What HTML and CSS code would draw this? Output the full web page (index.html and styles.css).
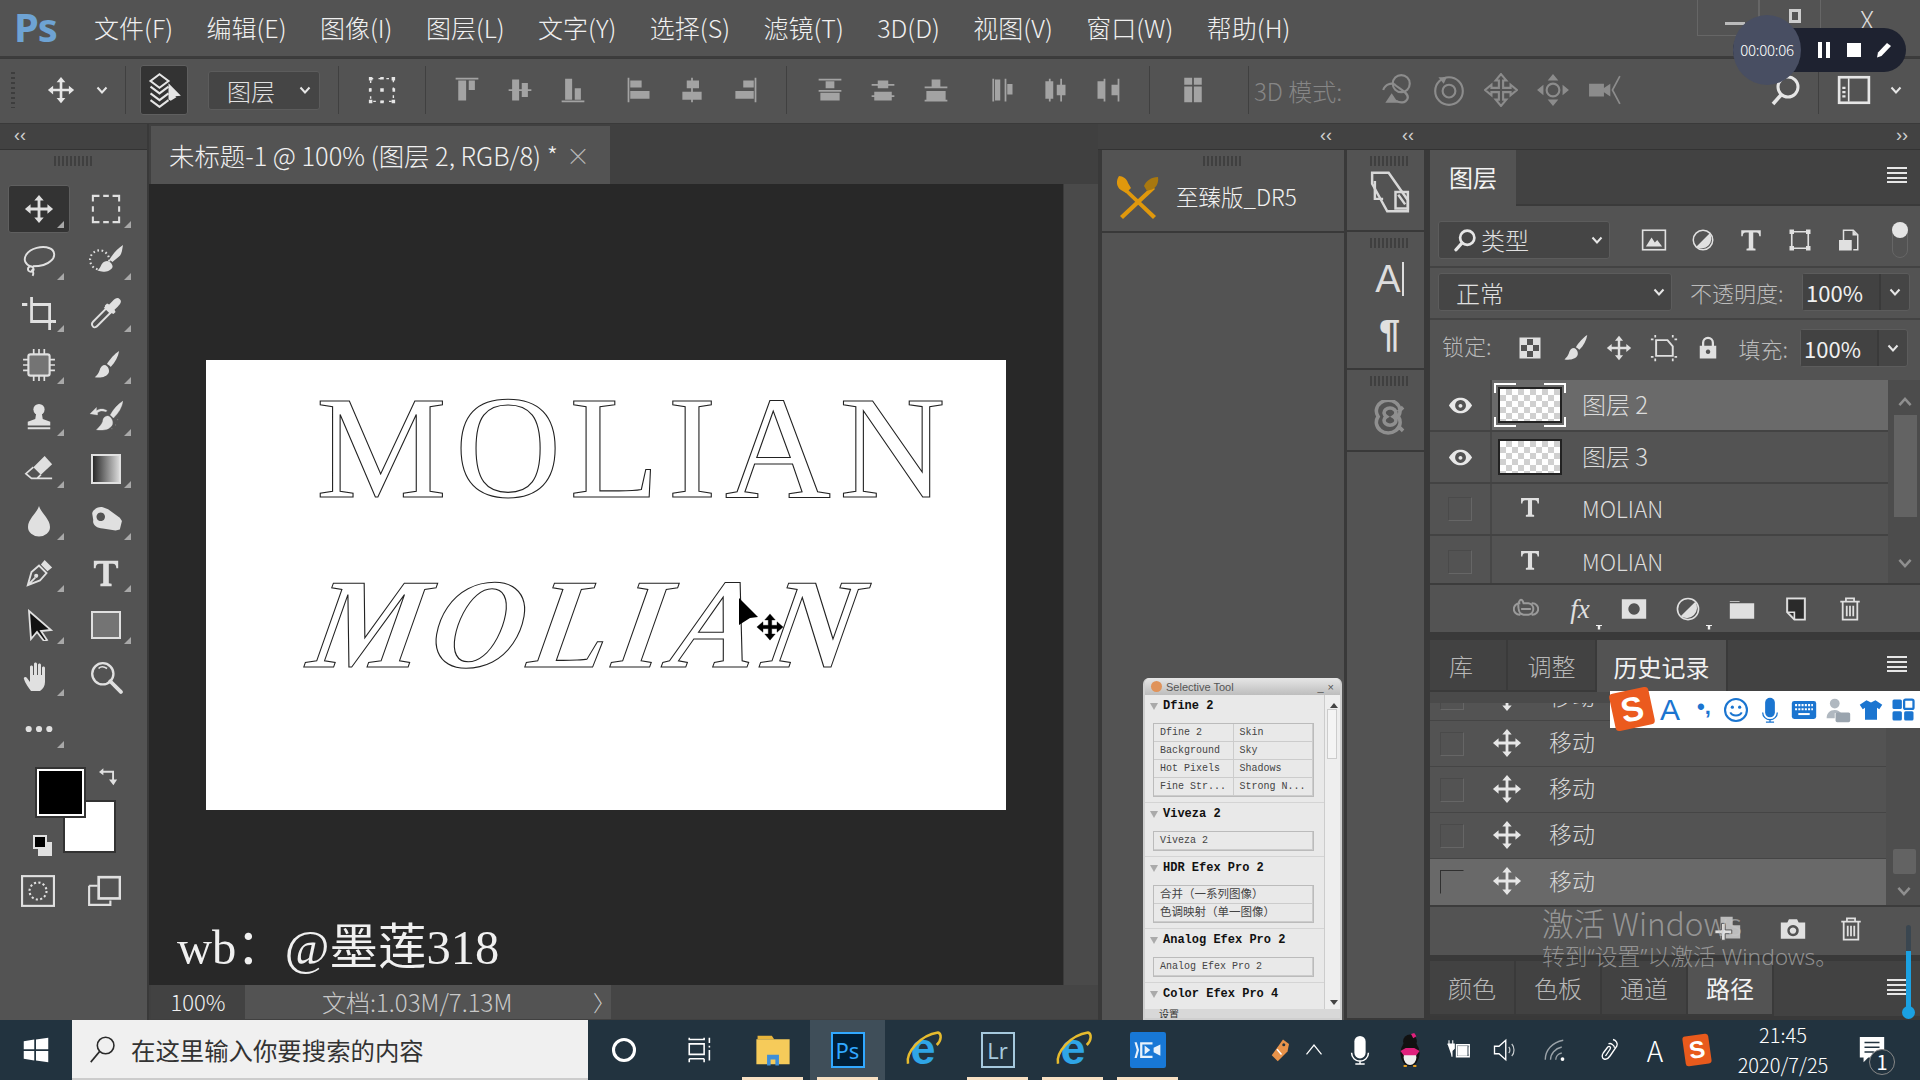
FILE: index.html
```html
<!DOCTYPE html>
<html lang="zh-CN">
<head>
<meta charset="utf-8">
<title>Photoshop</title>
<link rel="stylesheet" href="styles.css">
</head>
<body>
<svg class="sprite" xmlns="http://www.w3.org/2000/svg">
<defs>
<linearGradient id="grad"><stop offset="0" stop-color="#222"/><stop offset="1" stop-color="#ddd"/></linearGradient>
<symbol id="move" viewBox="0 0 32 32"><path d="M16 1l5 6h-3.500v7.500H25V11l6 5-6 5v-3.500h-7.500V25H21l-5 6-5-6h3.500v-7.500H7V21l-6-5 6-5v3.500h7.500V7H11z"/></symbol>
<symbol id="marquee" viewBox="0 0 32 32"><path d="M2 8V2h7M13 2h6M23 2h7v6M30 13v6M30 24v6h-7M19 30h-6M9 30H2v-6M2 19v-6" fill="none" stroke="currentColor" stroke-width="2.200"/></symbol>
<symbol id="lasso" viewBox="0 0 32 32"><path d="M8 21C3 19 1 15 4 10 8 4 19 1 26 4c5 2 6 8 1 12-4 4-11 5-17 5M9 21c-3 0-4 2-3 4 2 2 5 1 5-1s-3-4-5-3M9 24c2 2 2 4 1 6" fill="none" stroke="currentColor" stroke-width="1.800"/></symbol>
<symbol id="quick" viewBox="0 0 32 32"><circle cx="10" cy="15" r="9" fill="none" stroke="currentColor" stroke-width="2" stroke-dasharray="1.500 2.500"/><path d="M32 1c-1 5-1 9-4 11l-6 5c-1-1-2-2-3-2 3-5 8-11 13-14zM17 16c-3 0-5 2-6 5-1 2-2 3-3 4 5 2 12 1 14-3 1-2-2-6-5-6z"/></symbol>
<symbol id="crop" viewBox="0 0 32 32"><path d="M9 1v23h20M9 8h17v24M0 8h5M29 24h4" fill="none" stroke="currentColor" stroke-width="2.600"/></symbol>
<symbol id="dropper" viewBox="0 0 32 32"><path d="M4 29c-2-2-1-4 0-5l13-13 4 4L8 28c-1 1-3 2-4 1z" fill="none" stroke="currentColor" stroke-width="1.800"/><path d="M15 9l2-2 2 1 3-3c3-3 5-4 7-2s1 4-2 7l-3 3 1 2-2 2-2-1-1 1-6-6 1-1z"/></symbol>
<symbol id="patch" viewBox="0 0 32 32"><rect x="6" y="6" width="20" height="20" rx="2" fill="#747474" stroke="currentColor" stroke-width="2"/><path d="M11 1v30M16 1v30M21 1v30M1 11h30M1 16h30M1 21h30" stroke="currentColor" stroke-width="1.600" stroke-dasharray="5 20 7"/></symbol>
<symbol id="brush" viewBox="0 0 32 32"><path d="M30 1c-1 6-4 12-9 17-1-1-2-2-4-3 3-5 8-11 13-14zM15 16c-3 0-5 2-6 6-1 3-3 5-5 7 6 1 13 0 15-5 1-3-1-7-4-8z"/></symbol>
<symbol id="stamp" viewBox="0 0 32 32"><circle cx="16" cy="8" r="6"/><path d="M13 12h6l1 6 8 3v4H4v-4l8-3zM4 27h24v2H4z"/></symbol>
<symbol id="hist" viewBox="0 0 32 32"><path d="M32 1c-1 6-4 11-9 16-1-1-2-2-3-3 3-5 7-10 12-13zM18 15c-3 0-5 2-5 5-1 3-3 5-6 8 6 1 13 0 15-5 1-3-1-7-4-8zM1 13l6-6v3c3-2 7-2 10 0l-1 1c-3-1-6-1-8 1v2zM27 18v1M25 23v1M21 27h1" stroke="currentColor" stroke-width=".3"/></symbol>
<symbol id="eraser" viewBox="0 0 32 32"><path d="M22 2l8 9-12 11-8-8z"/><path d="M10 14l-8 7 6 5h22M18 22l-4 4" fill="none" stroke="currentColor" stroke-width="1.800"/></symbol>
<symbol id="gradient" viewBox="0 0 32 32"><rect x="2" y="2" width="28" height="28" fill="url(#grad)" stroke="currentColor" stroke-width="2"/></symbol>
<symbol id="drop" viewBox="0 0 32 32"><path d="M16 1c2 7 11 13 11 21a11 9.500 0 0 1-22 0C5 14 14 8 16 1z"/></symbol>
<symbol id="smudge" viewBox="0 0 32 32"><path fill-rule="evenodd" d="M3 9c0-3 5-7 10-6l5 2 11 8 2 3-2 8-4 1-12-2c-6 0-10-4-9-8l-1-6zm8-1a4 4 0 1 0 .1 0z"/></symbol>
<symbol id="pen" viewBox="0 0 32 32"><path d="M4 29l4-14 8-7 8 8-7 8zM4 29l8-8" fill="none" stroke="currentColor" stroke-width="2"/><path d="M18 7l4-5 8 8-5 4z"/><circle cx="13" cy="19" r="2.200"/></symbol>
<symbol id="textt" viewBox="0 0 32 32"><path d="M3 3h26v8h-2c0-3-1-5-4-5h-4v21l3 .5V30H10v-2.500l3-.5V6H9c-3 0-4 2-4 5H3z"/></symbol>
<symbol id="arrow" viewBox="0 0 32 32"><path d="M6 2l22 19-10 1 6 9-3 1-7-9-6 7z" fill="#111" stroke="#e0e0e0" stroke-width="1.800"/></symbol>
<symbol id="arrowblack" viewBox="0 0 20 27"><path d="M0 0L19 19 11 20 0 27z" fill="#000"/></symbol>
<symbol id="rect" viewBox="0 0 32 32"><rect x="2" y="3" width="28" height="26" fill="#747474" stroke="currentColor" stroke-width="2"/></symbol>
<symbol id="hand" viewBox="0 0 32 32"><path d="M8 30c-2-3-6-8-7-12-1-2 2-3 3-1l3 4V6c0-2 3-2 3 0v8h1V3c0-2 3-2 3 0v11h1V4c0-2 3-2 3 0v10h1V7c0-2 3-2 3 0v14c0 4-2 7-5 9z"/></symbol>
<symbol id="zoom" viewBox="0 0 32 32"><circle cx="13" cy="13" r="10" fill="none" stroke="currentColor" stroke-width="2.200"/><path d="M9 8c2-2 5-2 8 0" fill="none" stroke="currentColor" stroke-width="1.500"/><path d="M20 20l10 10" stroke="currentColor" stroke-width="3.600" stroke-linecap="round"/></symbol>
<symbol id="dots" viewBox="0 0 32 32"><circle cx="5" cy="16" r="3.300"/><circle cx="16" cy="16" r="3.300"/><circle cx="27" cy="16" r="3.300"/></symbol>
<symbol id="swap" viewBox="0 0 32 32"><path d="M0 8l7-6v4h17v14h5l-6 9-7-9h5V9H7v4z"/></symbol>
<symbol id="qmask" viewBox="0 0 32 32"><rect x="1" y="2" width="30" height="28" fill="none" stroke="currentColor" stroke-width="2"/><circle cx="16" cy="16" r="8" fill="none" stroke="currentColor" stroke-width="2" stroke-dasharray="2 2.200"/></symbol>
<symbol id="screen" viewBox="0 0 32 32"><path d="M2 11h8M2 11v18h20v-4M2 29" fill="none" stroke="currentColor" stroke-width="2"/><rect x="11" y="3" width="20" height="20" fill="none" stroke="currentColor" stroke-width="2.500"/></symbol>
<symbol id="chev" viewBox="0 0 32 32"><path d="M7 11l9 10 9-10" fill="none" stroke="currentColor" stroke-width="4"/></symbol>
<symbol id="chevup" viewBox="0 0 32 32"><path d="M7 21l9-10 9 10" fill="none" stroke="currentColor" stroke-width="4"/></symbol>
<symbol id="hamb" viewBox="0 0 20 16"><path d="M0 0h20v2H0zM0 5h20v2H0zM0 10h20v2H0zM0 14h20v2H0z"/></symbol>
<symbol id="lens" viewBox="0 0 32 32"><circle cx="19" cy="13" r="9.500" fill="none" stroke="currentColor" stroke-width="3.600"/><path d="M12 20l-8 9" stroke="currentColor" stroke-width="4.500" stroke-linecap="round"/></symbol>
<symbol id="autosel" viewBox="0 0 32 32"><path d="M12 2l8 6-8 6-8-6zM4 13l8 6 8-6M4 19l8 6 8-6M4 25l8 6 8-6" fill="none" stroke="currentColor" stroke-width="1.800"/><path d="M20 10l11 11-5 .5 1 1-5 3-2-1z"/></symbol>
<symbol id="xform" viewBox="0 0 32 32"><path d="M3 3h26v26H3z" fill="none" stroke="currentColor" stroke-width="1.600" stroke-dasharray="3 6"/><path d="M1 1h4v4H1zM27 1h4v4h-4zM1 27h4v4H1zM27 27h4v4h-4zM14 14h4v4h-4zM14 1h4v3h-4zM14 28h4v3h-4zM1 14h3v4H1zM28 14h3v4h-3z"/></symbol>
<symbol id="a1" viewBox="0 0 32 32"><path d="M3 2h26v2H3zM6 5h9v23H6zM18 5h7v11h-7z"/></symbol>
<symbol id="a2" viewBox="0 0 32 32"><path d="M3 15h26v2H3zM7 4h8v24H7zM18 8h7v16h-7z"/></symbol>
<symbol id="a3" viewBox="0 0 32 32"><path d="M3 28h26v2H3zM7 3h8v24H7zM18 14h7v13h-7z"/></symbol>
<symbol id="a4" viewBox="0 0 32 32"><path d="M3 2h2v28H3zM6 5h13v8H6zM6 17h22v9H6z"/></symbol>
<symbol id="a5" viewBox="0 0 32 32"><path d="M15 2h2v28h-2zM10 5h14v9H10zM5 18h22v9H5z"/></symbol>
<symbol id="a6" viewBox="0 0 32 32"><path d="M27 2h2v28h-2zM14 5h12v8H14zM5 17h21v9H5z"/></symbol>
<symbol id="d1" viewBox="0 0 32 32"><path d="M3 3h26v2H3zM11 6h10v8H11zM3 16h26v2H3zM5 19h22v9H5z"/></symbol>
<symbol id="d2" viewBox="0 0 32 32"><path d="M3 9h26v2H3zM10 5h12v4H10zM10 11h12v3H10zM3 22h26v2H3zM6 18h20v4H6zM6 24h20v4H6z"/></symbol>
<symbol id="d3" viewBox="0 0 32 32"><path d="M3 27h26v2H3zM11 4h10v8H11zM3 12h26v2H3zM5 17h22v10H5z"/></symbol>
<symbol id="d4" viewBox="0 0 32 32"><path d="M5 3h2v26H5zM8 4h6v24H8zM19 3h2v26h-2zM22 9h6v12h-6z"/></symbol>
<symbol id="d5" viewBox="0 0 32 32"><path d="M9 3h2v26H9zM5 6h4v20H5zM11 6h3v20h-3zM22 3h2v26h-2zM18 10h4v12h-4zM24 10h4v12h-4z"/></symbol>
<symbol id="d6" viewBox="0 0 32 32"><path d="M11 3h2v26h-2zM4 6h7v20H4zM27 3h2v26h-2zM20 10h7v12h-7z"/></symbol>
<symbol id="d7" viewBox="0 0 32 32"><path d="M6 2h9v8H6zM17 2h9v8h-9zM6 12h9v18H6zM17 12h9v18h-9z"/></symbol>
<symbol id="t1" viewBox="0 0 32 32"><g fill="none" stroke="currentColor" stroke-width="2"><circle cx="20" cy="10" r="8"/><path d="M3 16c2-6 8-7 11-5 3 3 14 8 12 13s-8 4-11 2"/></g><path d="M5 28l6-9 6 9z"/></symbol>
<symbol id="t2" viewBox="0 0 32 32"><g fill="none" stroke="currentColor" stroke-width="2"><circle cx="16" cy="17" r="13"/><circle cx="16" cy="17" r="6"/></g><path d="M6 4h8l-3 6z"/></symbol>
<symbol id="t3" viewBox="0 0 32 32"><path fill="none" stroke="currentColor" stroke-width="2" d="M16 1l5 6h-3v7h7v-3l6 5-6 5v-3h-7v7h3l-5 6-5-6h3v-7H7v3l-6-5 6-5v3h7V7h-3z"/></symbol>
<symbol id="t4" viewBox="0 0 32 32"><path d="M16 1l5 6h-10zM16 31l5-6h-10zM1 16l6-5v10zM31 16l-6-5v10z"/><rect x="10" y="10" width="12" height="12" rx="6" fill="none" stroke="currentColor" stroke-width="2"/></symbol>
<symbol id="t5" viewBox="0 0 32 32"><path d="M1 10h14v12H1zM15 14l6-4v12l-6-4z"/><path d="M30 3l-7 13 7 13" fill="none" stroke="currentColor" stroke-width="1.600"/></symbol>
<symbol id="search" viewBox="0 0 32 32"><circle cx="18" cy="13" r="10" fill="none" stroke="currentColor" stroke-width="3"/><path d="M11 21L3 30" stroke="currentColor" stroke-width="3.600"/></symbol>
<symbol id="search2" viewBox="0 0 32 32"><circle cx="19" cy="12" r="9.500" fill="none" stroke="currentColor" stroke-width="1.800"/><path d="M12 19L2 31" stroke="currentColor" stroke-width="1.800"/></symbol>
<symbol id="wspace" viewBox="0 0 32 32"><rect x="2" y="4" width="28" height="24" fill="none" stroke="currentColor" stroke-width="2.500"/><path d="M11 5v22" stroke="currentColor" stroke-width="1.500"/><path d="M5 13h3v2H5zM5 17h3v2H5zM5 21h3v2H5z"/></symbol>
<symbol id="dr5" viewBox="0 0 48 48"><path d="M6 44L38 14l3 3L9 47z" fill="#e0980c"/><path d="M5 4c4 0 8 3 9 7l3 5-5 5-5-3C2 15 2 8 5 4z" fill="#e0980c"/><path d="M42 44L12 16l-2 3 29 28z" fill="#e0980c"/><path d="M30 14c2-5 7-9 14-9 1 6-2 12-8 13l-3 1z" fill="#a8780f"/></symbol>
<symbol id="libs" viewBox="0 0 32 32"><g fill="none" stroke="currentColor" stroke-width="1.800"><path d="M3 2h12l14 20v8H14L3 10z"/><path d="M5 8v13h6M20 16h9v12H20zM22 18l5 7"/></g></symbol>
<symbol id="glyph" viewBox="0 0 32 32"><path fill="none" stroke="currentColor" stroke-width="3" d="M6 14a10 9 0 1 0 17 0 10 9 0 1 0-17 0zM13 14a5 4 0 1 0 6 0 5 4 0 1 0-6 0zM23 10l4-4M23 22l4 4"/></symbol>
<symbol id="img" viewBox="0 0 32 28"><rect x="2" y="2" width="28" height="24" fill="none" stroke="currentColor" stroke-width="2"/><path d="M6 22l7-11 4 6 3-3 6 8z"/></symbol>
<symbol id="half" viewBox="0 0 32 32"><circle cx="16" cy="16" r="13" fill="none" stroke="currentColor" stroke-width="2"/><path d="M25 7A13 13 0 0 1 7 25z"/></symbol>
<symbol id="shape" viewBox="0 0 32 32"><path d="M5 5h22v22H5z" fill="none" stroke="currentColor" stroke-width="2.200"/><path d="M2 2h6v6H2zM24 2h6v6h-6zM2 24h6v6H2zM24 24h6v6h-6z"/></symbol>
<symbol id="smart" viewBox="0 0 32 32"><path d="M10 16V3h13l6 6v20h-6" fill="none" stroke="currentColor" stroke-width="2"/><path d="M4 16h17v14H4zM22 3v7h7z"/></symbol>
<symbol id="check" viewBox="0 0 32 32"><path d="M3 3h26v26H3z" fill="none" stroke="currentColor" stroke-width="2"/><path d="M3 3h9v9H3zM20 3h9v9h-9zM12 12h8v8h-8zM3 20h9v9H3zM20 20h9v9h-9z"/></symbol>
<symbol id="artb" viewBox="0 0 32 32"><path d="M7 7h13l6 7v11H7z" fill="none" stroke="currentColor" stroke-width="2.200"/><path d="M1 5h3v2H1zM28 5h3v2h-3zM1 25h3v2H1zM28 25h3v2h-3zM5 1h2v3H5zM25 1h2v3h-2zM5 28h2v3H5zM25 28h2v3h-2z"/></symbol>
<symbol id="lock" viewBox="0 0 32 32"><path fill-rule="evenodd" d="M5 13h3V9a8 8 0 0 1 16 0v4h3v17H5zm6 0h10V9a5 5 0 0 0-10 0zm5 5a3 3 0 1 0 .1 0z"/></symbol>
<symbol id="eye" viewBox="0 0 32 22"><path fill-rule="evenodd" d="M1 11C6 3 11 1 16 1s10 2 15 10c-5 8-10 10-15 10S6 19 1 11zm15-7a7 7 0 1 0 .1 0zm0 5a2.500 2.500 0 1 1-.1 0z"/></symbol>
<symbol id="link" viewBox="0 0 32 20"><path d="M10 10h12M9 3H8a7 7 0 0 0 0 14h1M23 3h1a7 7 0 0 1 0 14h-1M7 10a3 7 0 0 1 6-7h6a7 7 0 0 1 6 7 7 7 0 0 1-6 7h-6a7 7 0 0 1-6-7" fill="none" stroke="currentColor" stroke-width="2.400"/></symbol>
<symbol id="mask" viewBox="0 0 32 26"><path fill-rule="evenodd" d="M1 1h30v24H1zM16 6a7 7 0 1 0 .1 0z"/></symbol>
<symbol id="folder" viewBox="0 0 32 26"><path d="M1 3h12v1H1zM1 6h30v19H1z"/></symbol>
<symbol id="newlayer" viewBox="0 0 32 32"><path d="M7 5h18v23H16l-9-9z" fill="#2a2a2a"/><path d="M5 3h22v26H14l-9-9z" fill="none" stroke="currentColor" stroke-width="2.200"/><path d="M5 20h9v9" fill="none" stroke="currentColor" stroke-width="2"/></symbol>
<symbol id="trash" viewBox="0 0 32 32"><path d="M4 7h24M11 6V3h10v3M7 8v21h18V8M12 12v13M16 12v13M20 12v13" fill="none" stroke="currentColor" stroke-width="2.200"/></symbol>
<symbol id="camera" viewBox="0 0 32 26"><path fill-rule="evenodd" d="M1 5h8l2-4h10l2 4h8v20H1zM16 8a7 7 0 1 0 .1 0zm0 3a4 4 0 1 1-.1 0z"/></symbol>
<symbol id="snap" viewBox="0 0 32 32"><path d="M8 3h13v9h8v14H8z" opacity=".75"/><path d="M9 10h4v7h7v4h-7v7H9v-7H2v-4h7z" stroke="#535353" stroke-width="1"/></symbol>
<symbol id="pause" viewBox="0 0 32 32"><path d="M4 0h8v32H4zM20 0h8v32h-8z"/></symbol>
<symbol id="stop" viewBox="0 0 32 32"><path d="M2 2h28v28H2z"/></symbol>
<symbol id="pencil" viewBox="0 0 32 32"><path d="M22 2l8 6L11 28l-9 3 2-10z"/></symbol>
<symbol id="win" viewBox="0 0 32 32"><path d="M2 6l12-2v11H2zM16 4l14-2v13H16zM2 17h12v11L2 26zM16 17h14v13l-14-2z"/></symbol>
<symbol id="circ" viewBox="0 0 32 32"><circle cx="16" cy="16" r="12" fill="none" stroke="currentColor" stroke-width="3.500"/></symbol>
<symbol id="tview" viewBox="0 0 32 32"><path d="M6 2v2h17V2M6 9h17v12H6zM6 26v4M23 26v4M6 26h17M29 2v6M29 11v2M29 16v12" fill="none" stroke="currentColor" stroke-width="1.800"/></symbol>
<symbol id="explorer" viewBox="0 0 32 32"><path d="M3 4h12l2 3H3z" fill="#e8b53c"/><path d="M2 7h28v21H2z" fill="#f6cb5a"/><path d="M11 29v-9h10v9h-3v-5h-4v5z" fill="#3f8fd8"/></symbol>
<symbol id="ie" viewBox="0 0 32 32"><text x="16" y="27" text-anchor="middle" class="ie-e">e</text><path d="M4 27C2 18 14 4 28 2c3 1 3 6-1 10" fill="none" stroke="#e6bb2e" stroke-width="2"/></symbol>
<symbol id="video" viewBox="0 0 32 32"><rect width="32" height="32" rx="2" fill="#1878d6"/><path d="M4 9h2l2 7-2 7H4l2-7zM9 9h11v2h-9v10h9v2H9zM13 12l5 4-5 4zM21 14l6-3v10l-6-3z" fill="#e8f2fb"/></symbol>
<symbol id="tag" viewBox="0 0 32 32"><path d="M20 2l8 6-2 10-13 13-8-8z" fill="#e8934a"/><circle cx="21" cy="9" r="2" fill="#22333f"/><path d="M12 15l6 7" stroke="#fff" stroke-width="2"/></symbol>
<symbol id="caret" viewBox="0 0 32 32"><path d="M4 23L16 8l12 15" fill="none" stroke="currentColor" stroke-width="2"/></symbol>
<symbol id="mic" viewBox="0 0 32 32"><rect x="10" y="1" width="12" height="24" rx="6"/><path d="M7 19a9 9 0 0 0 18 0M16 27v4M11 31h10" fill="none" stroke="currentColor" stroke-width="1.600"/></symbol>
<symbol id="qq" viewBox="0 0 32 32"><ellipse cx="16" cy="19" rx="9" ry="12" fill="#111"/><ellipse cx="16" cy="23" rx="6" ry="7" fill="#eee"/><circle cx="16" cy="8" r="6.500" fill="#111"/><path d="M12 14h8l5 3-3 4H10l-3-4z" fill="#e0207c"/><path d="M17 1l3-1 2 3-3 2z" fill="#e0207c"/><path d="M13 30h-3v2h3zM22 30h-3v2h3z" fill="#e8a020"/></symbol>
<symbol id="plug" viewBox="0 0 32 32"><path d="M14 9h17v16H14z" fill="none" stroke="currentColor" stroke-width="1.800"/><path d="M16 11h12v12H16zM31 13h1v8h-1zM4 3v5M9 3v5M2 8h9v6l-3 3v8" fill="currentColor" stroke="currentColor" stroke-width="1.400"/></symbol>
<symbol id="speaker" viewBox="0 0 32 32"><path d="M2 11h6l9-8v26l-9-8H2z" fill="none" stroke="currentColor" stroke-width="1.800"/><path d="M21 12c2 2 2 6 0 8M25 8c4 4 4 12 0 16" fill="none" stroke="currentColor" stroke-width="1.600" opacity=".75"/></symbol>
<symbol id="wifi" viewBox="0 0 32 32"><path d="M3 29C3 16 12 6 27 3M10 29c0-8 6-15 15-17M17 29c0-4 3-8 8-9" fill="none" stroke="currentColor" stroke-width="1.800" opacity=".55"/><circle cx="26" cy="28" r="2.500"/></symbol>
<symbol id="pentray" viewBox="0 0 32 32"><path d="M20 2c4 1 7 5 5 9l-9 13c-2 3-5 5-8 4s-3-5-1-8l6-8c2-2 5 0 3 3l-6 9M14 8c3-2 8 2 8 5" fill="none" stroke="currentColor" stroke-width="1.800"/></symbol>
<symbol id="notif" viewBox="0 0 32 32"><path d="M3 2h26v22H12l-5 5v-5H3z"/><path d="M8 8h16M8 13h16M8 18h10" stroke="#22333f" stroke-width="1.600"/></symbol>
<symbol id="smiley" viewBox="0 0 32 32"><circle cx="16" cy="16" r="13.500" fill="none" stroke="currentColor" stroke-width="2.600"/><circle cx="11.500" cy="12.500" r="2"/><circle cx="20.500" cy="12.500" r="2"/><path d="M9 19c2 5 12 5 14 0" fill="none" stroke="currentColor" stroke-width="2.400"/></symbol>
<symbol id="kbd" viewBox="0 0 32 24"><rect x="1" y="1" width="30" height="22" rx="3"/><path d="M5 6h22M5 11h22" stroke="#fff" stroke-width="2.500" stroke-dasharray="2.500 1.500"/><path d="M9 17h14" stroke="#fff" stroke-width="2.500"/></symbol>
<symbol id="user" viewBox="0 0 32 32"><circle cx="12" cy="8" r="6" fill="#b0b8c0"/><path d="M2 26c0-6 4-10 10-10 4 0 6 2 8 4H12v6z" fill="#b0b8c0"/><rect x="13" y="19" width="18" height="12" rx="2" fill="#9aa4ae"/></symbol>
<symbol id="shirt" viewBox="0 0 32 32"><path d="M10 3l6 3 6-3 9 6-4 6-3-2v16H8V13l-3 2-4-6z"/></symbol>
<symbol id="grid4" viewBox="0 0 32 32"><rect x="2" y="2" width="12.500" height="12.500" rx="2"/><rect x="17.500" y="2" width="12.500" height="12.500" rx="2" fill="none" stroke="currentColor" stroke-width="3"/><rect x="2" y="17.500" width="12.500" height="12.500" rx="2"/><rect x="17.500" y="17.500" width="12.500" height="12.500" rx="2"/></symbol>
<symbol id="cursormove" viewBox="0 0 32 32"><path d="M16 1l6 7h-4v6h6v-4l7 6-7 6v-4h-6v6h4l-6 7-6-7h4v-6H8v4l-7-6 7-6v4h6V8h-4z" fill="#000" stroke="#000" stroke-width=".4"/></symbol>
</defs>
</svg>

<div class="app">
  <header class="menubar">
    <span class="pslogo">Ps</span>
    <nav class="menu">
      <span>文件(F)</span><span>编辑(E)</span><span>图像(I)</span><span>图层(L)</span><span>文字(Y)</span><span>选择(S)</span><span>滤镜(T)</span><span>3D(D)</span><span>视图(V)</span><span>窗口(W)</span><span>帮助(H)</span>
    </nav>
    <div class="winctl">
      <span class="wc"><i class="wc-min"></i></span>
      <span class="wc wc-res"><i></i></span>
      <span class="wc wc-x">X</span>
    </div>
  </header>

  <div class="optbar">
    <span class="grip-v"></span>
    <span class="o o-move"><svg class="i28 lit"><use href="#move"/></svg></span>
    <span class="o o-chev"><svg class="i16 lit"><use href="#chev"/></svg></span>
    <span class="sep"></span>
    <span class="o o-auto"><svg class="i36 lit"><use href="#autosel"/></svg></span>
    <span class="o-select">图层<svg class="i16 lit"><use href="#chev"/></svg></span>
    <span class="sep sep-a"></span>
    <span class="o o-52"><svg class="i28 lit"><use href="#xform"/></svg></span>
    <span class="sep sep-b"></span>
    <span class="o o-53 first"><svg class="i28"><use href="#a1"/></svg></span>
    <span class="o o-53"><svg class="i28"><use href="#a2"/></svg></span>
    <span class="o o-53"><svg class="i28"><use href="#a3"/></svg></span>
    <span class="o o-53 group-gap"><svg class="i28"><use href="#a4"/></svg></span>
    <span class="o o-53"><svg class="i28"><use href="#a5"/></svg></span>
    <span class="o o-53"><svg class="i28"><use href="#a6"/></svg></span>
    <span class="sep sep-c"></span>
    <span class="o o-53 first-d"><svg class="i28"><use href="#d1"/></svg></span>
    <span class="o o-53"><svg class="i28"><use href="#d2"/></svg></span>
    <span class="o o-53"><svg class="i28"><use href="#d3"/></svg></span>
    <span class="o o-53 group-gap"><svg class="i28"><use href="#d4"/></svg></span>
    <span class="o o-53"><svg class="i28"><use href="#d5"/></svg></span>
    <span class="o o-53"><svg class="i28"><use href="#d6"/></svg></span>
    <span class="sep sep-d"></span>
    <span class="o o-86"><svg class="i28"><use href="#d7"/></svg></span>
    <span class="sep"></span>
    <span class="mode3d">3D 模式:</span>
    <span class="o o-52 dim"><svg class="i34"><use href="#t1"/></svg></span>
    <span class="o o-52 dim"><svg class="i34"><use href="#t2"/></svg></span>
    <span class="o o-52 dim"><svg class="i34"><use href="#t3"/></svg></span>
    <span class="o o-52 dim"><svg class="i34"><use href="#t4"/></svg></span>
    <span class="o o-52 dim"><svg class="i34"><use href="#t5"/></svg></span>
    <span class="o o-search"><svg class="i32 lit"><use href="#search"/></svg></span>
    <span class="sep"></span>
    <span class="o o-ws"><svg class="i34 lit"><use href="#wspace"/></svg></span>
    <span class="o o-chev2"><svg class="i16 lit"><use href="#chev"/></svg></span>
  </div>

  <div class="workspace">
    <aside class="tools">
      <div class="strip"><span class="coll">‹‹</span></div>
      <div class="grip"></div>
      <div class="toolgrid">
        <div class="tool on"><svg class="i30"><use href="#move"/></svg></div>
        <div class="tool"><svg class="i30"><use href="#marquee"/></svg></div>
        <div class="tool"><svg class="i34"><use href="#lasso"/></svg></div>
        <div class="tool"><svg class="i34"><use href="#quick"/></svg></div>
        <div class="tool"><svg class="i34"><use href="#crop"/></svg></div>
        <div class="tool"><svg class="i34"><use href="#dropper"/></svg></div>
        <div class="tool"><svg class="i34"><use href="#patch"/></svg></div>
        <div class="tool"><svg class="i30"><use href="#brush"/></svg></div>
        <div class="tool"><svg class="i30"><use href="#stamp"/></svg></div>
        <div class="tool"><svg class="i34"><use href="#hist"/></svg></div>
        <div class="tool"><svg class="i30"><use href="#eraser"/></svg></div>
        <div class="tool"><svg class="i32"><use href="#gradient"/></svg></div>
        <div class="tool"><svg class="i32"><use href="#drop"/></svg></div>
        <div class="tool"><svg class="i34"><use href="#smudge"/></svg></div>
        <div class="tool"><svg class="i30"><use href="#pen"/></svg></div>
        <div class="tool"><svg class="i30"><use href="#textt"/></svg></div>
        <div class="tool"><svg class="i32"><use href="#arrow"/></svg></div>
        <div class="tool"><svg class="i32"><use href="#rect"/></svg></div>
        <div class="tool"><svg class="i32"><use href="#hand"/></svg></div>
        <div class="tool noflag"><svg class="i34"><use href="#zoom"/></svg></div>
        <div class="tool"><svg class="i30"><use href="#dots"/></svg></div>
      </div>
      <div class="colors">
        <span class="swatch-bg"></span>
        <span class="swatch-fg"></span>
        <svg class="swap"><use href="#swap"/></svg>
        <span class="mini"><i></i></span>
      </div>
      <div class="modes">
        <svg class="i34"><use href="#qmask"/></svg>
        <svg class="i34"><use href="#screen"/></svg>
      </div>
    </aside>

    <main class="doc">
      <div class="tabstrip">
        <div class="doctab"><span>未标题-1 @ 100% (图层 2, RGB/8) *</span><span class="doctab-x">×</span></div>
      </div>
      <div class="docmid">
        <div class="pasteboard">
          <div class="canvas">
            <div class="out out1">MOLIAN</div>
            <div class="out out2">MOLIAN</div>
            <svg class="cur-arrow"><use href="#arrowblack"/></svg>
            <svg class="cur-move"><use href="#cursormove"/></svg>
          </div>
          <div class="signature">wb：@墨莲318</div>
        </div>
        <div class="docscroll"></div>
      </div>
      <div class="status">
        <span class="st-zoom">100%</span>
        <span class="st-info">文档:1.03M/7.13M<i>〉</i></span>
        <span class="st-rest"></span>
      </div>
    </main>

    <section class="dock dock-a">
      <div class="strip strip-r"><span class="coll">‹‹</span></div>
      <div class="panel p-dr5">
        <div class="grip"></div>
        <div class="dr5row"><svg class="i48"><use href="#dr5"/></svg><span>至臻版_DR5</span></div>
      </div>
      <div class="panel p-fill"></div>
    </section>

    <section class="dock dock-b">
      <div class="strip strip-r"><span class="coll">‹‹</span></div>
      <div class="panel mini1"><div class="grip"></div><svg class="i44"><use href="#libs"/></svg></div>
      <div class="panel mini2">
        <div class="grip"></div>
        <div class="acaret"><span>A</span><i></i></div>
        <div class="para">¶</div>
      </div>
      <div class="panel mini3"><div class="grip"></div><svg class="i38 dim"><use href="#glyph"/></svg></div>
      <div class="panel p-fill"></div>
    </section>

    <section class="dock dock-c">
      <div class="strip strip-r"><span class="coll">››</span></div>

      <div class="panel layers">
        <div class="tabs t-layers">
          <span class="tab active">图层</span>
          <svg class="menuic lit"><use href="#hamb"/></svg>
        </div>
        <div class="lrow f-row">
          <span class="fld fld-kind"><svg class="i24 lit"><use href="#lens"/></svg><b>类型</b><svg class="i16 lit"><use href="#chev"/></svg></span>
          <span class="f-ic"><svg class="i26"><use href="#img"/></svg></span>
          <span class="f-ic"><svg class="i24"><use href="#half"/></svg></span>
          <span class="f-ic"><svg class="i24"><use href="#textt"/></svg></span>
          <span class="f-ic"><svg class="i24"><use href="#shape"/></svg></span>
          <span class="f-ic"><svg class="i24"><use href="#smart"/></svg></span>
          <span class="toggle"></span>
        </div>
        <div class="lrow b-row">
          <span class="fld fld-blend"><b>正常</b><svg class="i16 lit"><use href="#chev"/></svg></span>
          <span class="lbl">不透明度:</span>
          <span class="num"><b>100%</b><em><svg class="i16 lit"><use href="#chev"/></svg></em></span>
        </div>
        <div class="lrow l-row">
          <span class="lbl lock-lbl">锁定:</span>
          <span class="l-ic"><svg class="i24"><use href="#check"/></svg></span>
          <span class="l-ic"><svg class="i28"><use href="#brush"/></svg></span>
          <span class="l-ic"><svg class="i26"><use href="#move"/></svg></span>
          <span class="l-ic"><svg class="i28"><use href="#artb"/></svg></span>
          <span class="l-ic"><svg class="i24"><use href="#lock"/></svg></span>
          <span class="lbl fill-lbl">填充:</span>
          <span class="num"><b>100%</b><em><svg class="i16 lit"><use href="#chev"/></svg></em></span>
        </div>
        <div class="laylist">
          <div class="layrows">
            <div class="layer sel"><span class="vis"><svg class="eye"><use href="#eye"/></svg></span><span class="body"><span class="thumb cornered"></span><span class="lname">图层 2</span></span></div>
            <div class="layer"><span class="vis"><svg class="eye"><use href="#eye"/></svg></span><span class="body"><span class="thumb"></span><span class="lname">图层 3</span></span></div>
            <div class="layer"><span class="vis"><i class="box"></i></span><span class="body"><span class="tcell"><svg class="i22"><use href="#textt"/></svg></span><span class="lname lat">MOLIAN</span></span></div>
            <div class="layer"><span class="vis"><i class="box"></i></span><span class="body"><span class="tcell"><svg class="i22"><use href="#textt"/></svg></span><span class="lname lat">MOLIAN</span></span></div>
          </div>
          <div class="lscroll">
            <svg class="i20 dim"><use href="#chevup"/></svg>
            <span class="thumbbar"></span>
            <svg class="i20 dim"><use href="#chev"/></svg>
          </div>
        </div>
        <div class="lfoot">
          <svg class="fi fi-first dim"><use href="#link"/></svg>
          <span class="fx">fx</span>
          <svg class="fi"><use href="#mask"/></svg>
          <span class="flagwrap"><svg class="fi"><use href="#half"/></svg></span>
          <svg class="fi"><use href="#folder"/></svg>
          <svg class="fi"><use href="#newlayer"/></svg>
          <svg class="fi"><use href="#trash"/></svg>
        </div>
      </div>

      <div class="panel history">
        <div class="tabs t-hist">
          <span class="tab t76">库</span>
          <span class="tab t87">调整</span>
          <span class="tab t131 active">历史记录</span>
          <svg class="menuic lit"><use href="#hamb"/></svg>
        </div>
        <div class="hbody">
          <div class="hlist">
            <div class="hrow"><i class="box"></i><svg class="i30 lit"><use href="#move"/></svg><span>移动</span></div>
            <div class="hrow"><i class="box"></i><svg class="i30 lit"><use href="#move"/></svg><span>移动</span></div>
            <div class="hrow"><i class="box"></i><svg class="i30 lit"><use href="#move"/></svg><span>移动</span></div>
            <div class="hrow"><i class="box"></i><svg class="i30 lit"><use href="#move"/></svg><span>移动</span></div>
            <div class="hrow cur"><i class="box"></i><svg class="i30 lit"><use href="#move"/></svg><span>移动</span></div>
          </div>
          <div class="hscroll"><span class="hthumb"></span><svg class="i20 dim"><use href="#chev"/></svg></div>
        </div>
        <div class="hfoot">
          <svg class="fi fi-snap"><use href="#snap"/></svg>
          <svg class="fi fi-cam"><use href="#camera"/></svg>
          <svg class="fi"><use href="#trash"/></svg>
        </div>
      </div>

      <div class="tabs t-paths">
        <span class="tab t85">颜色</span>
        <span class="tab t85">色板</span>
        <span class="tab t85">通道</span>
        <span class="tab t85 active">路径</span>
        <svg class="menuic lit"><use href="#hamb"/></svg>
      </div>
    </section>
  </div>
</div>

<footer class="taskbar">
  <span class="start"><svg class="i28 white"><use href="#win"/></svg></span>
  <div class="searchbox"><svg class="i28"><use href="#search2"/></svg><span>在这里输入你要搜索的内容</span></div>
  <span class="tb tb-cort"><svg class="i28 white"><use href="#circ"/></svg></span>
  <span class="tb"><svg class="i28 white"><use href="#tview"/></svg></span>
  <span class="tb under"><svg class="i38"><use href="#explorer"/></svg></span>
  <span class="tb under act"><span class="appbox ps">Ps</span></span>
  <span class="tb"><svg class="i40"><use href="#ie"/></svg></span>
  <span class="tb under"><span class="appbox lr">Lr</span></span>
  <span class="tb under"><svg class="i40"><use href="#ie"/></svg></span>
  <span class="tb under"><svg class="i36"><use href="#video"/></svg></span>
  <div class="tray">
    <svg class="i24"><use href="#tag"/></svg>
    <svg class="i20 white"><use href="#caret"/></svg>
    <svg class="i30 white"><use href="#mic"/></svg>
    <svg class="i34"><use href="#qq"/></svg>
    <svg class="i24 white"><use href="#plug"/></svg>
    <svg class="i24 white"><use href="#speaker"/></svg>
    <svg class="i24 white"><use href="#wifi"/></svg>
    <svg class="i24 white"><use href="#pentray"/></svg>
    <span class="tray-a">A</span>
    <span class="tray-s">S</span>
    <div class="clock"><span>21:45</span><span>2020/7/25</span></div>
    <span class="notif"><svg class="i30 white"><use href="#notif"/></svg><b>1</b></span>
  </div>
</footer>

<!-- floating overlays -->
<div class="selective">
  <div class="sel-title"><i class="sel-dot"></i><span>Selective Tool</span><em>_</em><em>×</em></div>
  <div class="sel-main">
    <div class="sel-content">
      <section class="sel-sec"><h4>Dfine 2</h4>
        <div class="sel-grid"><span>Dfine 2</span><span>Skin</span><span>Background</span><span>Sky</span><span>Hot Pixels</span><span>Shadows</span><span>Fine Str...</span><span>Strong N...</span></div></section>
      <section class="sel-sec"><h4>Viveza 2</h4><div class="sel-grid one"><span>Viveza 2</span></div></section>
      <section class="sel-sec"><h4>HDR Efex Pro 2</h4><div class="sel-grid one cj"><span>合并（一系列图像）</span><span>色调映射（单一图像）</span></div></section>
      <section class="sel-sec"><h4>Analog Efex Pro 2</h4><div class="sel-grid one"><span>Analog Efex Pro 2</span></div></section>
      <section class="sel-sec last"><h4>Color Efex Pro 4</h4></section>
    </div>
    <div class="sel-scroll"><i class="up"></i><b></b><i class="down"></i></div>
  </div>
  <div class="sel-foot">设置</div>
</div>

<div class="recorder">
  <span class="rec-time">00:00:06</span>
  <svg class="i16 white"><use href="#pause"/></svg>
  <svg class="i16 white"><use href="#stop"/></svg>
  <svg class="i16 white"><use href="#pencil"/></svg>
</div>

<div class="ime">
  <span class="ime-logo">S</span>
  <span class="ime-a">A</span>
  <span class="ime-p">•,</span>
  <svg class="i26"><use href="#smiley"/></svg>
  <svg class="i26"><use href="#mic"/></svg>
  <svg class="i26"><use href="#kbd"/></svg>
  <svg class="i26"><use href="#user"/></svg>
  <svg class="i24"><use href="#shirt"/></svg>
  <svg class="i24"><use href="#grid4"/></svg>
</div>

<div class="activate">
  <div class="act1">激活 Windows</div>
  <div class="act2">转到“设置”以激活 Windows。</div>
</div>

<div class="volume"><i></i></div>
</body>
</html>
```

FILE: styles.css
```css
* { box-sizing: border-box; }
html, body { margin: 0; padding: 0; }
body {
  width: 1920px; height: 1080px; overflow: hidden; position: relative;
  background: #3c3c3c; color: #e0e0e0;
  font-family: "Noto Sans CJK SC", "Noto Sans", sans-serif; font-weight: 300;
}
.sprite { position: absolute; width: 0; height: 0; }
svg { fill: currentColor; display: block; flex: none; }
i, em { font-style: normal; }
b { font-weight: inherit; }

.i16 { width: 16px; height: 16px; } .i20 { width: 20px; height: 20px; }
.i22 { width: 22px; height: 22px; } .i24 { width: 24px; height: 24px; }
.i26 { width: 26px; height: 26px; } .i28 { width: 28px; height: 28px; }
.i30 { width: 30px; height: 30px; } .i32 { width: 32px; height: 32px; }
.i34 { width: 34px; height: 34px; } .i36 { width: 36px; height: 36px; }
.i38 { width: 38px; height: 38px; } .i40 { width: 40px; height: 40px; }
.i44 { width: 44px; height: 44px; } .i48 { width: 48px; height: 48px; }
.lit { color: #e6e6e6; } .white { color: #fff; } .dim { color: #8f8f8f; }

.app { height: 1020px; display: flex; flex-direction: column; }

/* menu */
.menubar { height: 56px; flex: none; background: #535353; display: flex; align-items: center; padding: 0 0 3px 14px; }
.pslogo { font: 700 40px/1 "Noto Sans", sans-serif; color: #6ea3d4; width: 80px; letter-spacing: -1px; }
.menu { display: flex; gap: 33.400px; font-size: 25px; color: #f0f0f0; white-space: nowrap; }
.winctl { margin-left: auto; align-self: flex-start; display: flex; height: 36px; margin-right: 7px; }
.wc { width: 62px; border: 1px solid #666; border-top: 0; display: flex; align-items: center; justify-content: center; color: #ddd; }
.wc-min { width: 20px; height: 3px; background: #bbb; margin: 12px 0 0 14px; }
.wc-res i { width: 12px; height: 14px; border: 3px solid #ccc; margin: -4px 0 0 10px; }
.wc-x { border: 0; font-size: 26px; width: 92px; }

/* options */
.optbar { height: 66px; flex: none; margin-top: 2px; padding-bottom: 2px; background: #535353; border-top: 1px solid #3a3a3a; display: flex; align-items: center; color: #a3a3a3; border-bottom: 1px solid #3a3a3a; position: relative; }
.grip-v { width: 4px; height: 36px; margin-left: 11px; background: repeating-linear-gradient(#3d3d3d 0 2px, transparent 2px 5px); }
.o { display: flex; align-items: center; justify-content: center; flex: none; height: 48px; }
.o.dim { color: #8c8c8c; }
.o-move { width: 60px; margin-left: 16px; }
.o-chev { width: 22px; margin-left: 0; }
.sep { width: 1px; height: 48px; background: #404040; flex: none; margin-left: 12px; }
.o-auto { width: 48px; margin-left: 14px; height: 50px; background: #333; border: 1px solid #5f5f5f; border-radius: 3px; }
.o-select { width: 112px; height: 39px; margin-left: 20px; background: #454545; border: 1px solid #5c5c5c; border-radius: 3px; display: flex; align-items: center; justify-content: space-between; padding: 0 6px 0 18px; font-size: 24px; color: #e2e2e2; }
.sep-a { margin-left: 18px; }
.o-52 { width: 52px; }
.sep + .o-52 { margin-left: 18px; }
.sep-b { margin-left: 17px; }
.o-53 { width: 53px; }
.first { margin-left: 14px; }
.sep-a + .o-52 { margin-left: 17px; }
.group-gap { margin-left: 13px; }
.sep-c { margin-left: 15px; }
.first-d { margin-left: 16px; }
.sep-d { margin-left: 15px; }
.o-86 { width: 86px; }
.sep-d + .o-86 { margin-left: 0; }
.mode3d { font-size: 24px; color: #868686; width: 122px; flex: none; padding-left: 5px; white-space: nowrap; }
.mode3d + .o-52 { margin-left: 0; }
.o-search { width: 40px; margin-left: 135px; }
.o-ws { width: 40px; margin-left: 15px; }
.o-chev2 { width: 22px; margin-left: 11px; }

/* workspace */
.workspace { flex: 1; display: flex; background: #393939; min-height: 0; }
.strip { height: 26px; background: #424242; display: flex; align-items: center; padding: 0 14px 0 14px; flex: none; border-bottom: 1px solid #333; }
.strip-r { justify-content: flex-end; }
.coll { font: 400 18px/1 "Liberation Sans", sans-serif; color: #cfcfcf; letter-spacing: 0; position: relative; top: -2px; }
.grip { height: 10px; width: 40px; margin: 6px auto 0; background: repeating-linear-gradient(90deg, #3f3f3f 0 2px, transparent 2px 4px); flex: none; }

.tools { width: 147px; flex: none; background: #535353; display: flex; flex-direction: column; }
.toolgrid { display: grid; grid-template-columns: 67px 67px; grid-auto-rows: 52px; padding: 17px 0 0 5px; }
.tool { position: relative; display: flex; align-items: center; justify-content: center; color: #e0e0e0; }
.tool::after { content: ""; position: absolute; right: 8px; bottom: 7px; width: 7px; height: 7px; background: #a8a8a8; clip-path: polygon(100% 0, 100% 100%, 0 100%); }
.tool.noflag::after { display: none; }
.tool.on::before { content: ""; position: absolute; left: 3px; right: 2px; top: 2px; bottom: 2px; background: #333; border: 1px solid #5f5f5f; border-radius: 3px; }
.tool.on svg { position: relative; }
.colors { position: relative; height: 106px; margin-top: 4px; flex: none; }
.swatch-fg { position: absolute; left: 37px; top: 10px; width: 47px; height: 47px; background: #000; border: 2px solid #fff; outline: 2px solid #333; }
.swatch-bg { position: absolute; left: 65px; top: 43px; width: 49px; height: 49px; background: #fff; outline: 2px solid #333; }
.swap { position: absolute; left: 99px; top: 8px; width: 20px; height: 20px; color: #e0e0e0; }
.mini { position: absolute; left: 33px; top: 76px; width: 14px; height: 14px; background: #e0e0e0; }
.mini::after { content: ""; position: absolute; left: 5px; top: 7px; width: 14px; height: 14px; background: #e0e0e0; }
.mini i { position: absolute; left: 2px; top: 2px; width: 10px; height: 10px; background: #000; z-index: 1; }
.modes { display: flex; margin-top: 9px; padding-left: 21px; gap: 32px; color: #e0e0e0; }

/* document */
.doc { width: 949px; margin-left: 2px; flex: none; display: flex; flex-direction: column; background: #404040; }
.tabstrip { height: 60px; flex: none; padding-top: 2px; background: #404040; display: flex; border-left: 2px solid #404040; }
.doctab { width: 459px; background: #535353; display: flex; align-items: center; padding-left: 18px; font-size: 25.400px; color: #f0f0f0; white-space: nowrap; }
.doctab-x { margin-left: 8px; font-size: 24px; line-height: 1; color: #b8b8b8; }
.docmid { flex: 1; display: flex; min-height: 0; }
.pasteboard { flex: 1; background: #282828; display: flex; align-items: center; justify-content: center; position: relative; }
.docscroll { width: 35px; flex: none; background: #4a4a4a; border-left: 1px solid #3b3b3b; }
.canvas { width: 800px; height: 450px; background: #fff; position: relative; overflow: hidden; }
.out { position: absolute; color: #fff; white-space: nowrap; -webkit-text-stroke: 1.100px #222; font-family: "Liberation Serif", serif; }
.out1 { left: 110px; top: 3px; font-size: 147px; line-height: 1.15; letter-spacing: 8.300px; font-weight: 400; }
.out2 { left: 107px; top: 191px; font-size: 128px; line-height: 1.15; font-style: italic; font-weight: 700; letter-spacing: 7px; transform: skewX(-10deg); }
.cur-arrow { position: absolute; left: 533px; top: 238px; width: 20px; height: 27px; }
.cur-move { position: absolute; left: 550px; top: 253px; width: 28px; height: 28px; }
.signature { position: absolute; left: 28px; bottom: 6px; font: 400 48.500px/1.3 "Liberation Serif", "Noto Sans CJK SC", serif; color: #f0f0f0; white-space: nowrap; }
.status { height: 34px; flex: none; background: #404040; display: flex; margin-bottom: 1px; }
.st-zoom { width: 94px; margin-left: 2px; background: #424242; text-align: center; line-height: 33px; color: #f0f0f0; font-size: 22px; }
.st-info { width: 366px; background: #535353; display: flex; line-height: 33px; color: #c8c8c8; padding-left: 77px; font-size: 24px; white-space: nowrap; }
.st-info i { margin-left: auto; color: #ccc; width: 18px; font-size: 22px; }
.st-rest { flex: 1; background: #454545; }

/* docks */
.dock { display: flex; flex-direction: column; flex: none; background: #393939; }
.dock-a { width: 248px; }
.dock-b { width: 82px; }
.dock-c { width: 494px; }
.panel { background: #535353; flex: none; }
.dock-a > .panel { margin-left: 4px; margin-right: 2px; }
.dock-b > .panel { margin: 0 4px 2px 1px; padding-left: 8px; }
.p-dr5 { height: 81px; margin-bottom: 2px; }
.p-fill { flex: 1; }
.dr5row { display: flex; align-items: center; padding: 6px 0 0 12px; gap: 14px; font-size: 22.500px; color: #f0f0f0; white-space: nowrap; }
.mini1 { height: 80px; } .mini2 { height: 136px; } .mini3 { height: 80px; }
.mini1 svg, .mini3 svg { margin: 4px auto 0; color: #d8d8d8; }
.mini3 svg { color: #8f8f8f; margin-top: 14px; }
.acaret { display: flex; justify-content: center; align-items: center; height: 40px; margin-top: 11px; font: 400 38px/1 "Liberation Sans", sans-serif; color: #ddd; }
.acaret i { width: 2px; height: 34px; background: #ddd; margin-left: 1px; }
.para { text-align: center; font: 700 38px/1 "Liberation Sans", sans-serif; color: #e0e0e0; margin-top: 16px; }

.dock-c > .panel { margin-left: 2px; }
.tabs { display: flex; background: #424242; flex: none; position: relative; font-size: 24px; align-items: stretch; }
.tab { display: flex; align-items: center; justify-content: center; border-right: 2px solid #3a3a3a; color: #b8b8b8; }
.tab.active { background: #535353; color: #f2f2f2; font-weight: 400; }
.t-layers { height: 56px; border-bottom: 2px solid #3a3a3a; }
.t-layers .tab { width: 86px; height: 56px; border: 0; padding-bottom: 3px; }
.menuic { position: absolute; right: 15px; top: 50%; width: 20px; height: 16px; margin-top: -10px; }
.layers { height: 482px; display: flex; flex-direction: column; }
.lrow { display: flex; align-items: center; border-bottom: 2px solid #434343; flex: none; }
.f-row { height: 62px; padding: 7px 0 0 8px; }
.fld { background: #454545; border: 1px solid #5c5c5c; border-radius: 3px; display: flex; align-items: center; color: #e0e0e0; font-size: 24px; }
.fld svg:last-child { margin-left: auto; }
.fld-kind { width: 172px; height: 38px; padding: 0 4px 0 14px; }
.fld-kind b { margin-left: 4px; }
.fld-blend { width: 234px; height: 38px; padding: 0 4px 0 17px; }
.f-ic { width: 48.500px; display: flex; justify-content: center; color: #e0e0e0; flex: none; }
.fld-kind + .f-ic { margin-left: 20px; }
.toggle { width: 16px; height: 36px; margin-left: 19px; border: 1px solid #666; border-radius: 8px; position: relative; flex: none; }
.toggle::before { content: ""; position: absolute; left: -1px; top: -1px; width: 16px; height: 16px; border-radius: 50%; background: #e4e4e4; }
.b-row { height: 52px; padding: 0 0 2px 8px; }
.lbl { color: #bcbcbc; font-size: 22px; white-space: nowrap; flex: none; }
.b-row .lbl { margin-left: 18px; width: 112px; }
.num { width: 108px; height: 38px; background: #454545; border: 1px solid #5c5c5c; border-radius: 3px; display: flex; flex: none; font-size: 22px; color: #f0f0f0; }
.num b { flex: 1; padding-left: 3px; line-height: 36px; background: #424242; font-weight: 400; }
.num em { width: 30px; border-left: 2px solid #3a3a3a; display: flex; align-items: center; justify-content: center; }
.l-row { height: 60px; padding: 0 0 4px 12px; border: 0; }
.lock-lbl { width: 66px; margin-bottom: 6px; }
.l-ic { width: 44.500px; display: flex; justify-content: center; color: #e0e0e0; flex: none; }
.fill-lbl { margin-left: 8px; width: 61.500px; }

.laylist { height: 203px; display: flex; flex: none; overflow: hidden; }
.layrows { width: 458px; flex: none; }
.layer { height: 52px; display: flex; border-bottom: 2px solid #434343; }
.layer:last-child { border-bottom: 0; }
.vis { width: 62px; flex: none; display: flex; align-items: center; justify-content: center; border-right: 2px solid #474747; }
.eye { width: 25px; height: 17px; color: #e8e8e8; }
.box { width: 24px; height: 24px; border: 1px solid #4a4a4a; border-right-color: #666; border-bottom-color: #666; display: block; flex: none; }
.body { flex: 1; display: flex; align-items: center; }
.sel .body { background: #6a6a6a; }
.thumb { width: 64px; height: 36px; margin-left: 6px; border: 2px solid #222; background: repeating-conic-gradient(#d0d0d0 0 25%, #fff 0 50%) 0 0 / 12px 12px; position: relative; flex: none; }
.cornered::before { content: ""; position: absolute; inset: -6px; background:
  linear-gradient(#fff,#fff) 0 0 / 22px 2px no-repeat, linear-gradient(#fff,#fff) 100% 0 / 22px 2px no-repeat,
  linear-gradient(#fff,#fff) 0 100% / 22px 2px no-repeat, linear-gradient(#fff,#fff) 100% 100% / 22px 2px no-repeat,
  linear-gradient(#fff,#fff) 0 0 / 2px 10px no-repeat, linear-gradient(#fff,#fff) 100% 0 / 2px 10px no-repeat,
  linear-gradient(#fff,#fff) 0 100% / 2px 10px no-repeat, linear-gradient(#fff,#fff) 100% 100% / 2px 10px no-repeat; }
.tcell { width: 64px; margin-left: 6px; display: flex; justify-content: center; color: #e0e0e0; flex: none; margin-top: -4px; }
.lname { margin: -3px 0 0 20px; font-size: 24px; color: #dcdcdc; }
.lat { font-size: 22.500px; }
.lscroll { flex: 1; display: flex; flex-direction: column; align-items: center; background: #4c4c4c; padding-top: 12px; }
.thumbbar { width: 23px; height: 102px; background: #636363; margin: 3px 0 36px; }
.lfoot { height: 49px; flex: none; display: flex; align-items: center; padding-left: 83px; border-top: 2px solid #3c3c3c; }
.fi { width: 26px; height: 26px; color: #e0e0e0; margin-right: 28px; flex: none; }
.fi-first { color: #9a9a9a; }
.fx { font: italic 400 27px/26px "Liberation Serif", serif; color: #e0e0e0; width: 26px; margin-right: 28px; position: relative; text-align: center; }
.flagwrap { position: relative; flex: none; display: block; }
.fx::after, .flagwrap::after { content: ""; position: absolute; width: 6px; height: 5px; background: #f0f0f0; clip-path: polygon(0 0, 100% 0, 100% 30%, 70% 30%, 70% 100%, 30% 100%, 30% 30%, 0 30%); }
.fx::after { right: -9px; bottom: -8px; }
.flagwrap::after { left: 31px; bottom: -8px; }

.history { height: 315px; margin-top: 8px; display: flex; flex-direction: column; }
.t-hist { height: 52px; }
.t-hist .tab { border-bottom: 2px solid #3a3a3a; }
.t-hist .tab.active { border-bottom: 0; }
.t76 { width: 78px; padding-right: 14px; } .t87 { width: 89px; } .t131 { width: 131px; } .t85 { width: 86px; }
.hbody { height: 213px; display: flex; flex: none; }
.hlist { width: 456px; flex: none; display: flex; flex-direction: column; justify-content: flex-end; overflow: hidden; border-top: 11px solid #4a4a4a; }
.hrow { height: 46px; flex: none; display: flex; align-items: center; padding-left: 10px; font-size: 23px; color: #d8d8d8; border-bottom: 1px solid #454545; }
.hrow .box { margin-right: 28px; }
.hrow svg { margin-right: 27px; margin-top: -2px; }
.hrow span { margin-top: -5px; }
.cur { background: #696969; border: 0; }
.cur .box { border-color: #303030 #696969 #696969 #303030; }
.hscroll { flex: 1; display: flex; flex-direction: column; align-items: center; justify-content: flex-end; padding-bottom: 4px; background: #4e4e4e; }
.hthumb { width: 23px; height: 25px; background: #636363; border-radius: 2px; margin-bottom: 7px; }
.hfoot { flex: 1; display: flex; align-items: center; justify-content: flex-end; padding: 0 30px 4px 0; border-top: 2px solid #3c3c3c; }
.fi-snap { width: 30px; height: 30px; margin-right: 37px; }
.fi-cam { margin-right: 32px; }
.t-paths { height: 55px; margin: 6px 0 0 2px; }
.t-paths .tab { border-bottom: 2px solid #3a3a3a; }

/* taskbar */
.taskbar { height: 60px; background: #22333f; display: flex; align-items: center; }
.start { width: 72px; display: flex; justify-content: center; }
.searchbox { width: 516px; height: 60px; background: #f0f0f0; display: flex; align-items: center; padding-left: 17px; gap: 14px; color: #2a2a2a; font-size: 24.400px; border-bottom: 2px solid #ccc; }
.searchbox span { color: #333; font-weight: 400; }
.tb { width: 75px; height: 60px; flex: none; display: flex; align-items: center; justify-content: center; position: relative; }
.tb-cort { width: 72px; }
.under::after { content: ""; position: absolute; left: 7px; right: 7px; bottom: 0; height: 3px; background: #f8e1c4; }
.act { background: #3f4e59; }
.appbox { width: 34px; height: 36px; display: flex; align-items: center; justify-content: center; font: 400 22px/1 "Noto Sans", sans-serif; }
.ps { background: #001e36; border: 2px solid #31a8ff; color: #31a8ff; }
.lr { background: #22333f; border: 2px solid #a6c9dd; color: #a6c9dd; }
.ie-e { font: 700 36px "Liberation Sans", sans-serif; fill: #2fa5e6; }
.tray { margin-left: auto; padding-right: 23px; display: grid; grid-template-columns: 34px 34px 58px 42px 54px 40px 60px 50px 40px 44px 128px 50px; align-items: center; justify-items: center; }
.tray-a { font-size: 28px; color: #fff; }
.tray-s { width: 26px; height: 30px; background: #e85a1c; color: #fff; font: 700 24px/30px "Liberation Sans", sans-serif; text-align: center; border-radius: 3px; transform: rotate(-8deg); }
.clock { display: flex; flex-direction: column; align-items: center; color: #fff; font-size: 20px; line-height: 30px; white-space: nowrap; }
.notif { position: relative; display: block; }
.notif b { position: absolute; left: 12px; top: 14px; width: 26px; height: 26px; border-radius: 50%; border: 1px solid #888; background: #22333f; color: #fff; font-size: 20px; line-height: 24px; text-align: center; font-weight: 400; }

/* overlays */
.selective { position: absolute; left: 1143px; top: 678px; width: 199px; height: 342px; background: #e9e9e9; border-radius: 6px 6px 0 0; overflow: hidden; color: #444; display: flex; flex-direction: column; border: 2px solid #cfcfcf; border-top: 0; }
.sel-title { height: 17px; flex: none; background: linear-gradient(#e6e6e6, #bdbdbd); display: flex; align-items: center; padding: 0 6px; font: 400 11px "Liberation Sans", sans-serif; color: #555; gap: 4px; }
.sel-title span { flex: 1; }
.sel-dot { width: 11px; height: 11px; border-radius: 50%; background: #e0935a; }
.sel-main { flex: 1; display: flex; min-height: 0; }
.sel-content { width: 180px; flex: none; border-right: 1px solid #ccc; }
.sel-sec { border-bottom: 1px solid #d4d4d4; padding: 3px 8px 5px 8px; font: 400 10px/18px "Liberation Mono", "Noto Sans CJK SC", monospace; }
.sel-sec.last { border: 0; }
.sel-sec h4 { margin: 0 0 8px 0; padding-left: 10px; font: 700 12px/17px "Liberation Mono", monospace; color: #111; position: relative; }
.sel-sec h4::before { content: ""; position: absolute; left: -3px; top: 5px; border: 4px solid transparent; border-top: 7px solid #aaa; }
.sel-grid { display: grid; grid-template-columns: 1fr 1fr; border: 1px solid #bbb; background: #e9e9e9; margin-right: 2px; }
.sel-grid.one { grid-template-columns: 1fr; }
.sel-grid.cj { font-size: 11.500px; }
.sel-grid span { padding-left: 6px; height: 18px; border-bottom: 1px solid #ccc; border-right: 1px solid #ccc; white-space: nowrap; overflow: hidden; }
.sel-scroll { flex: 1; position: relative; background: #eee; }
.sel-scroll b { position: absolute; left: 2px; right: 3px; top: 14px; height: 50px; background: #f4f4f4; border: 1px solid #ccc; }
.sel-scroll .up { position: absolute; left: 5px; top: 4px; border: 4px solid transparent; border-bottom: 5px solid #444; }
.sel-scroll .down { position: absolute; left: 5px; top: 305px; border: 4px solid transparent; border-top: 5px solid #444; }
.sel-foot { height: 9px; flex: none; background: #d8d8d8; font: 400 10px/10px "Noto Sans CJK SC", sans-serif; padding-left: 14px; color: #333; }

.recorder { position: absolute; left: 1733px; top: 28px; width: 173px; height: 44px; background: #1e2230; border-radius: 22px; display: flex; align-items: center; gap: 14px; color: #fff; }
.rec-time { width: 68px; height: 70px; margin: -13px 1px -13px 0; flex: none; background: #484e62; border-radius: 50%; font-size: 15px; line-height: 70px; text-align: center; letter-spacing: -.3px; }

.ime { position: absolute; left: 1610px; top: 691px; width: 310px; height: 37px; background: #fff; display: flex; align-items: center; color: #1b75d0; padding-left: 50px; gap: 8px; }
.ime-logo { position: absolute; left: 2px; top: -1px; width: 40px; height: 38px; background: #eb5a1e; color: #fff; border-radius: 4px; transform: rotate(-12deg); font: 700 34px/38px "Liberation Sans", sans-serif; text-align: center; }
.ime-a { font: 400 30px/1 "Liberation Sans", sans-serif; width: 22px; }
.ime-p { font: 700 22px/1 "Liberation Sans", sans-serif; width: 22px; text-align: center; margin-left: 3px; margin-top: -6px; }

.activate { position: absolute; left: 1542px; top: 902px; color: rgba(200,200,200,.58); pointer-events: none; white-space: nowrap; }
.act1 { font-size: 31.500px; line-height: 40px; }
.act2 { font-family: "Noto Sans", "Noto Sans CJK SC", sans-serif; font-size: 22.800px; line-height: 30px; }

.volume { position: absolute; left: 1906px; top: 925px; width: 5px; height: 92px; background: #3a4650; border-radius: 3px; }
.volume i { position: absolute; left: 0; right: 0; top: 26px; bottom: 0; background: #1ba1e2; }
.volume::after { content: ""; position: absolute; left: -4px; bottom: -2px; width: 13px; height: 13px; border-radius: 50%; background: #1ba1e2; }
```
